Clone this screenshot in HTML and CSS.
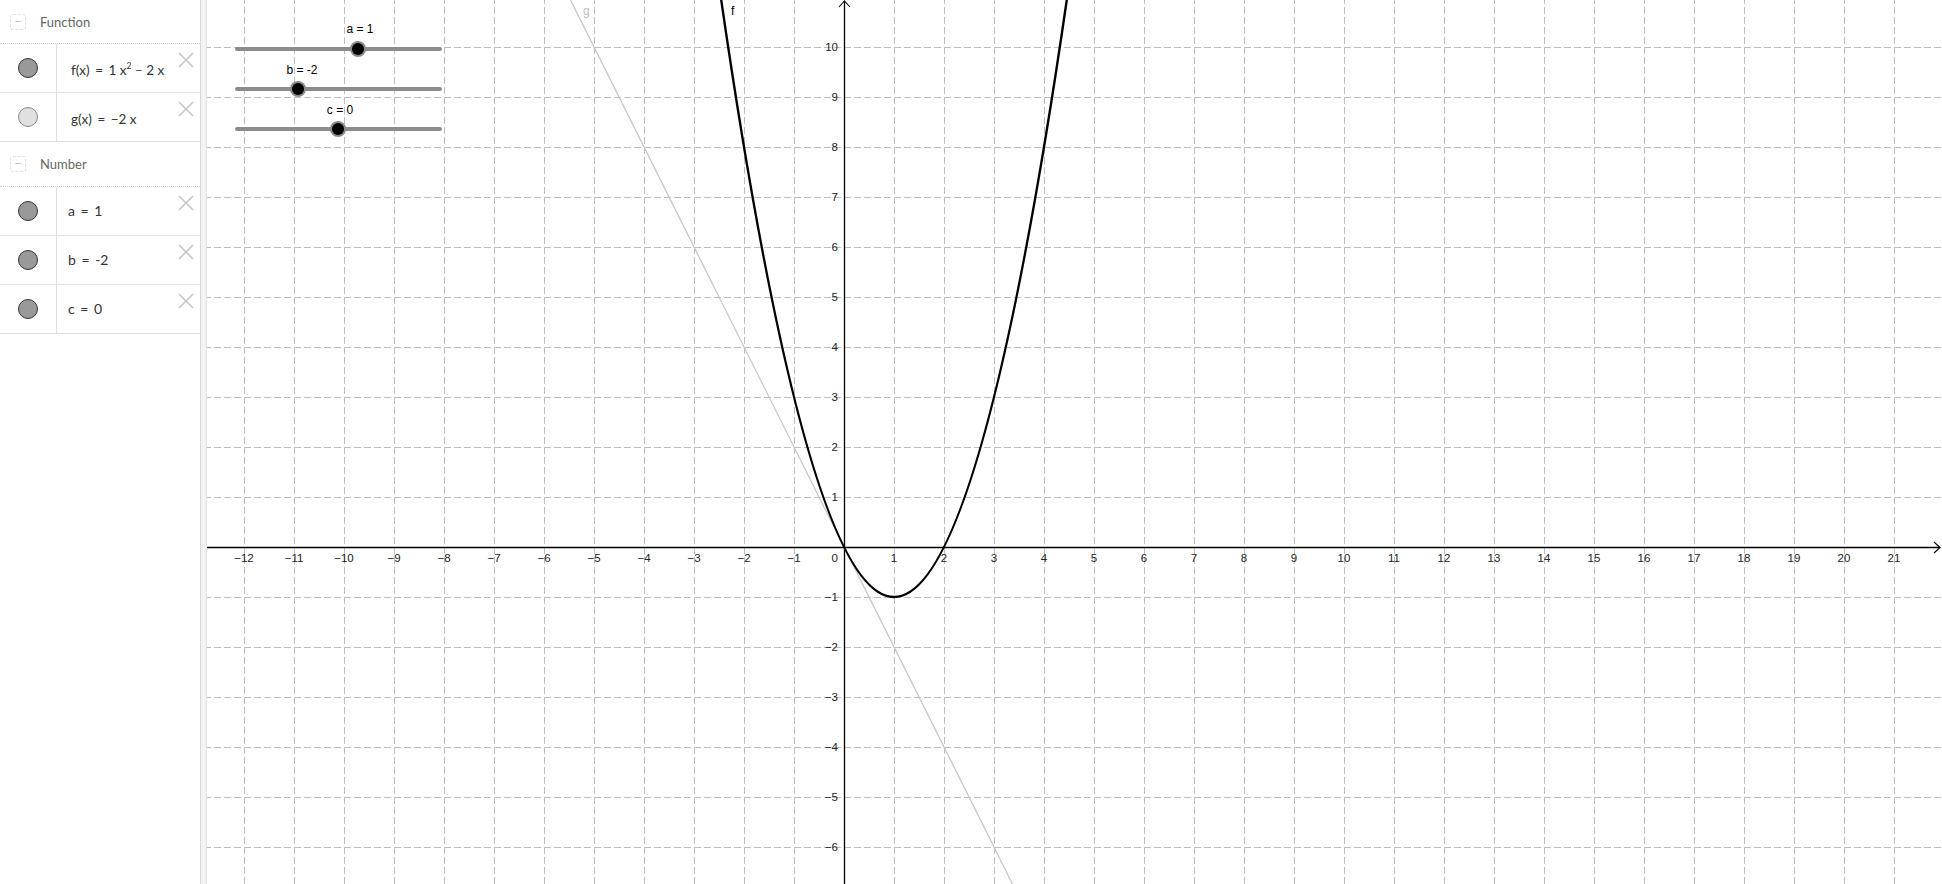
FILE: index.html
```html
<!DOCTYPE html>
<html>
<head>
<meta charset="utf-8">
<link rel="stylesheet" href="styles.css">
</head>
<body>
<div class="app">
  <aside class="algebra">
    <div class="group-head"><span class="toggle">−</span><span class="group-title">Function</span></div>
    <div class="item">
      <div class="marble-col"><span class="marble"></span></div>
      <div class="expr expr-fn">f(x) <span class="eq">=</span> 1 x<sup>2</sup> <span class="op">−</span> 2 x</div>
      <span class="del"><svg viewBox="0 0 16 16" width="16" height="16"><path d="M1 1L15 15M15 1L1 15"/></svg></span>
    </div>
    <div class="item">
      <div class="marble-col"><span class="marble off"></span></div>
      <div class="expr expr-fn">g(x) <span class="eq">=</span> −2 x</div>
      <span class="del"><svg viewBox="0 0 16 16" width="16" height="16"><path d="M1 1L15 15M15 1L1 15"/></svg></span>
    </div>
    <div class="group-head group-head-next"><span class="toggle">−</span><span class="group-title">Number</span></div>
    <div class="item">
      <div class="marble-col"><span class="marble"></span></div>
      <div class="expr">a <span class="eq">=</span> 1</div>
      <span class="del"><svg viewBox="0 0 16 16" width="16" height="16"><path d="M1 1L15 15M15 1L1 15"/></svg></span>
    </div>
    <div class="item">
      <div class="marble-col"><span class="marble"></span></div>
      <div class="expr">b <span class="eq">=</span> -2</div>
      <span class="del"><svg viewBox="0 0 16 16" width="16" height="16"><path d="M1 1L15 15M15 1L1 15"/></svg></span>
    </div>
    <div class="item">
      <div class="marble-col"><span class="marble"></span></div>
      <div class="expr">c <span class="eq">=</span> 0</div>
      <span class="del"><svg viewBox="0 0 16 16" width="16" height="16"><path d="M1 1L15 15M15 1L1 15"/></svg></span>
    </div>
  </aside>
  <div class="splitter"><span class="splitter-dots"></span></div>
  <main class="graphics">
    <svg class="plot" viewBox="207 0 1735 884" width="1735" height="884">
      <defs>
        <pattern id="grid" patternUnits="userSpaceOnUse" x="844" y="547" width="50" height="50">
          <path d="M0.5 0V50" stroke="#bdbdbd" stroke-width="1" stroke-dasharray="7 3"/>
          <path d="M0 0.5H50" stroke="#bdbdbd" stroke-width="1" stroke-dasharray="7 3"/>
        </pattern>
      </defs>
      <rect x="207" y="0" width="1735" height="884" fill="#fff"/>
      <rect x="207" y="0" width="1735" height="884" fill="url(#grid)"/>

      <g class="xlabels">
        <text x="244" y="562">−12</text><text x="294" y="562">−11</text><text x="344" y="562">−10</text>
        <text x="394" y="562">−9</text><text x="444" y="562">−8</text><text x="494" y="562">−7</text>
        <text x="544" y="562">−6</text><text x="594" y="562">−5</text><text x="644" y="562">−4</text>
        <text x="694" y="562">−3</text><text x="744" y="562">−2</text><text x="794" y="562">−1</text>
        <text x="894" y="562">1</text><text x="944" y="562">2</text><text x="994" y="562">3</text>
        <text x="1044" y="562">4</text><text x="1094" y="562">5</text><text x="1144" y="562">6</text>
        <text x="1194" y="562">7</text><text x="1244" y="562">8</text><text x="1294" y="562">9</text>
        <text x="1344" y="562">10</text><text x="1394" y="562">11</text><text x="1444" y="562">12</text>
        <text x="1494" y="562">13</text><text x="1544" y="562">14</text><text x="1594" y="562">15</text>
        <text x="1644" y="562">16</text><text x="1694" y="562">17</text><text x="1744" y="562">18</text>
        <text x="1794" y="562">19</text><text x="1844" y="562">20</text><text x="1894" y="562">21</text>
      </g>
      <g class="ylabels">
        <text x="838" y="51">10</text><text x="838" y="101">9</text><text x="838" y="151">8</text>
        <text x="838" y="201">7</text><text x="838" y="251">6</text><text x="838" y="301">5</text>
        <text x="838" y="351">4</text><text x="838" y="401">3</text><text x="838" y="451">2</text>
        <text x="838" y="501">1</text><text x="838" y="562">0</text>
        <text x="838" y="601">−1</text><text x="838" y="651">−2</text><text x="838" y="701">−3</text>
        <text x="838" y="751">−4</text><text x="838" y="801">−5</text><text x="838" y="851">−6</text>
      </g>

      <path d="M207 547.5H1940" stroke="#000" stroke-width="1.3" fill="none"/>
      <path d="M1934 542L1940 547.5L1934 553" stroke="#000" stroke-width="1.1" fill="none"/>
      <path d="M844.5 884V1" stroke="#000" stroke-width="1.3" fill="none"/>
      <path d="M839 7L844.5 1L850 7" stroke="#000" stroke-width="1.1" fill="none"/>

      <path d="M570.5 0L1012.5 884" stroke="#c4c4c4" stroke-width="1.2" fill="none"/>
      <path d="M714 -51Q894 1245 1074 -51" stroke="#000" stroke-width="2.4" fill="none"/>

      <text class="fn-label" x="731" y="15">f</text>
      <text class="fn-label fn-label-g" x="583" y="15">g</text>

      <g class="slider">
        <path class="track" d="M237 49H440"/>
        <circle cx="358" cy="49" r="8" class="ring"/>
        <circle cx="358" cy="49" r="6" class="knob"/>
        <text x="360" y="33">a = 1</text>
      </g>
      <g class="slider">
        <path class="track" d="M237 89H440"/>
        <circle cx="298" cy="89" r="8" class="ring"/>
        <circle cx="298" cy="89" r="6" class="knob"/>
        <text x="302" y="74">b = -2</text>
      </g>
      <g class="slider">
        <path class="track" d="M237 129H440"/>
        <circle cx="338" cy="129" r="8" class="ring"/>
        <circle cx="338" cy="129" r="6" class="knob"/>
        <text x="340" y="114">c = 0</text>
      </g>
    </svg>
  </main>
</div>
</body>
</html>
```

FILE: styles.css
```css
html, body {
  margin: 0;
  padding: 0;
  background: #fff;
}

body {
  font-family: "Lato", "Open Sans", "DejaVu Sans", sans-serif;
}

.app {
  display: flex;
  width: 1942px;
  height: 884px;
  overflow: hidden;
}

.algebra {
  width: 200px;
  flex: none;
  background: #fff;
}

.group-head {
  height: 43px;
  border-bottom: 1px dotted #cfcfcf;
  display: flex;
  align-items: center;
  padding-left: 10px;
}

.group-head-next {
  height: 44px;
}

.toggle {
  width: 14px;
  height: 14px;
  border: 1px dashed #dedede;
  border-radius: 3px;
  color: #c4c4c4;
  font-size: 13px;
  line-height: 13px;
  text-align: center;
  margin-right: 14px;
}

.group-title {
  font-size: 13px;
  color: #666;
}

.item {
  display: flex;
  height: 48px;
  border-bottom: 1px solid #e0e0e0;
}

.marble-col {
  width: 56px;
  flex: none;
  border-right: 1px solid #dedede;
  display: flex;
  align-items: center;
  justify-content: center;
}

.marble {
  width: 20px;
  height: 20px;
  box-sizing: border-box;
  border-radius: 50%;
  background: #999;
  border: 1px solid #333;
}

.marble.off {
  background: #e0e0e0;
  border-color: #8a8a8a;
}

.expr {
  flex: 1;
  align-self: center;
  padding-left: 11px;
  font-size: 14px;
  line-height: 20px;
  color: #333;
  white-space: pre;
}

.expr-fn {
  padding-left: 14px;
  font-size: 13.5px;
  padding-top: 3px;
}

.expr sup {
  font-size: 8.5px;
  line-height: 0;
  vertical-align: 6px;
}

.eq {
  margin: 0 2px;
}

.op {
  color: #555;
}

.del {
  width: 16px;
  height: 16px;
  flex: none;
  margin: 8px 6px 0 0;
}

.del svg {
  display: block;
  stroke: #c6c6c6;
  stroke-width: 1.6;
  fill: none;
}

.splitter {
  width: 5px;
  flex: none;
  background: #f1f1f1;
  border-left: 1px solid #d9d9d9;
  border-right: 1px solid #e4e4e4;
  display: flex;
  justify-content: center;
}

.splitter-dots {
  border-left: 1px dotted #fdfdfd;
}

.graphics {
  flex: 1;
  min-width: 0;
}

.plot {
  display: block;
}

.xlabels text {
  font-family: "Liberation Sans", Arial, sans-serif;
  font-size: 11.5px;
  fill: #222;
  text-anchor: middle;
}

.ylabels text {
  font-family: "Liberation Sans", Arial, sans-serif;
  font-size: 11.5px;
  fill: #222;
  text-anchor: end;
}

.fn-label {
  font-family: "Liberation Sans", Arial, sans-serif;
  font-size: 12px;
  fill: #000;
}

.fn-label-g {
  fill: #bcbcbc;
}

.slider .track {
  stroke: #8c8c8c;
  stroke-width: 4;
  stroke-linecap: round;
  fill: none;
}

.slider .ring {
  fill: #8a8a8a;
}

.slider .knob {
  fill: #000;
}

.slider text {
  font-family: "Liberation Sans", Arial, sans-serif;
  font-size: 12px;
  fill: #000;
  text-anchor: middle;
}
```
